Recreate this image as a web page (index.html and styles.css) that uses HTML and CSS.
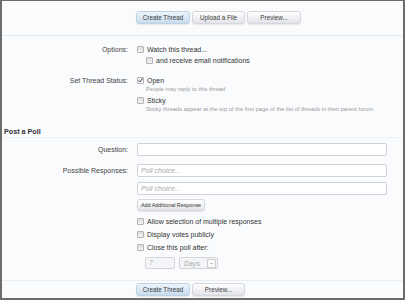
FILE: index.html
```html
<!DOCTYPE html>
<html lang="en">
<head>
  <meta charset="UTF-8">
  <title>Post New Thread</title>
  <link rel="stylesheet" href="styles.css">
</head>
<body>
  <div class="frame">
    <!-- top submit buttons -->
    <div class="toolbar">
      <button class="btn primary">Create Thread</button>
      <button class="btn">Upload a File</button>
      <button class="btn">Preview...</button>
    </div>

    <!-- thread options -->
    <div class="row row-options">
      <div class="label">Options:</div>
      <div class="controls">
        <div class="check"><span class="box"></span>Watch this thread...</div>
        <div class="check indent"><span class="box"></span>and receive email notifications</div>
      </div>
    </div>

    <div class="row row-status">
      <div class="label">Set Thread Status:</div>
      <div class="controls">
        <div class="check"><span class="box checked"><svg viewBox="0 0 7 7" width="7" height="7"><polyline points="1.4,3.4 2.9,5 5.6,1.3" fill="none" stroke="#3d4a5c" stroke-width="1"/></svg></span>Open</div>
        <div class="hint">People may reply to this thread</div>
        <div class="check sticky"><span class="box"></span>Sticky</div>
        <div class="hint">Sticky threads appear at the top of the first page of the list of threads in their parent forum</div>
      </div>
    </div>

    <h3 class="heading">Post a Poll</h3>

    <div class="row row-question">
      <div class="label">Question:</div>
      <div class="controls">
        <div class="textbox"></div>
      </div>
    </div>

    <div class="row row-responses">
      <div class="label">Possible Responses:</div>
      <div class="controls">
        <div class="textbox"><span class="placeholder">Poll choice...</span></div>
        <div class="textbox second"><span class="placeholder">Poll choice...</span></div>
        <button class="btn small">Add Additional Response</button>
        <div class="check poll-first"><span class="box"></span>Allow selection of multiple responses</div>
        <div class="check poll"><span class="box"></span>Display votes publicly</div>
        <div class="check poll"><span class="box"></span>Close this poll after:</div>
        <div class="close-after">
          <div class="num">7</div>
          <div class="select">Days<span class="arrow"><svg viewBox="0 0 9 9" width="9" height="9"><polygon points="3,4 6,4 4.5,5.6" fill="#999"/></svg></span></div>
        </div>
      </div>
    </div>

    <!-- bottom submit buttons -->
    <div class="footer">
      <button class="btn primary">Create Thread</button>
      <button class="btn">Preview...</button>
    </div>
  </div>
</body>
</html>
```

FILE: styles.css
```css
/* reset */
html, body {
  margin: 0;
  padding: 0;
  background-color: #ffffff;
  font-family: 'Liberation Sans', Arial, sans-serif;
  color: #3a3a3a;
}
*, *::before, *::after {
  box-sizing: border-box;
}
.frame {
  width: 405px;
  height: 300px;
  overflow: hidden;
  background-color: #fafbfd;
  border: 2px solid #6c6c6c;
  border-top-width: 1px;
}
/* buttons */
.btn {
  display: inline-block;
  height: 13px;
  padding: 0;
  margin: 0;
  font-family: 'Liberation Sans', Arial, sans-serif;
  font-size: 6.3px;
  color: #3b3b3b;
  border: 1px solid #d6d7dc;
  border-radius: 3px;
  background: linear-gradient(#ffffff, #e3e4e9);
  box-shadow: 0 1px 1px rgba(0, 0, 0, 0.08);
}
.btn.primary {
  border-color: #bfd2e4;
  background: linear-gradient(#edf4fb, #c8dcee);
}
.toolbar {
  display: flex;
  gap: 2px;
  padding: 10px 0 11px 134px;
  border-bottom: 1px solid #e3ebf3;
}
.toolbar .btn {
  width: 54px;
}
.toolbar .btn:nth-child(2) {
  width: 53px;
}
/* form rows */
.row {
  display: grid;
  grid-template-columns: 126px 1fr;
  column-gap: 9px;
  padding-right: 16px;
  font-size: 7px;
}
.label {
  text-align: right;
  line-height: 11px;
  color: #444;
}
.controls {
  display: flex;
  flex-direction: column;
  align-items: flex-start;
}
.check {
  display: flex;
  align-items: center;
  height: 11px;
  line-height: 11px;
  color: #333;
}
.check.indent {
  margin-left: 9px;
}
.box {
  display: inline-flex;
  width: 7px;
  height: 7px;
  margin-right: 3px;
  border: 1px solid #b4b4b4;
  border-radius: 1px;
  background: linear-gradient(#dcdcdc, #f4f4f4);
}
.box.checked {
  background: linear-gradient(#eeeeee, #fbfbfb);
}
.box.checked svg {
  margin: -1px;
  flex-shrink: 0;
}
.hint {
  font-size: 5.75px;
  line-height: 7px;
  color: #9a9a9a;
  margin-left: 9px;
}
.row-options {
  margin-top: 8px;
}
.row-status {
  margin-top: 9px;
}
.check.sticky {
  margin-top: 2px;
}
.heading {
  margin: 13px 0 0 0;
  padding: 0 2px 0 2px;
  height: 12px;
  line-height: 11px;
  font-size: 7.2px;
  font-weight: bold;
  color: #333;
  border-bottom: 1px solid #eef2f7;
}
/* poll */
.textbox {
  width: 100%;
  height: 13px;
  padding: 0 3px;
  line-height: 11px;
  background: #ffffff;
  border: 1px solid #cfd2d8;
  border-radius: 2px;
}
.placeholder {
  font-style: italic;
  color: #a8a8a8;
}
.row-question {
  margin-top: 5px;
}
.row-question .label {
  line-height: 13px;
}
.row-responses {
  margin-top: 8px;
}
.row-responses .label {
  line-height: 13px;
}
.textbox.second {
  margin-top: 5px;
}
.btn.small {
  width: 68px;
  height: 12px;
  margin-top: 4px;
  font-size: 5.4px;
}
.check.poll-first {
  margin-top: 5px;
}
.check.poll {
  margin-top: 2px;
}
.close-after {
  display: flex;
  gap: 4px;
  margin-top: 4px;
  margin-left: 8px;
}
.num {
  width: 30px;
  height: 12px;
  padding-left: 3px;
  line-height: 10px;
  font-style: italic;
  color: #b0b0b0;
  background: #f4f5f7;
  border: 1px solid #d3d5da;
  border-radius: 2px;
}
.select {
  display: flex;
  justify-content: space-between;
  align-items: center;
  width: 39px;
  height: 12px;
  padding: 0 1px 0 4px;
  font-style: italic;
  color: #a8a8a8;
  background: #f4f5f7;
  border: 1px solid #d3d5da;
  border-radius: 2px;
}
.arrow {
  display: flex;
  width: 9px;
  height: 9px;
  border: 1px solid #cfcfcf;
  background: #fafafa;
}
.arrow svg {
  width: 7px;
  height: 7px;
}
.footer {
  display: flex;
  gap: 2px;
  margin-top: 11px;
  padding: 2px 0 0 134px;
  border-top: 1px solid #e9eef3;
}
.footer .btn {
  width: 54px;
}
.footer .btn:nth-child(2) {
  width: 53px;
}
```
